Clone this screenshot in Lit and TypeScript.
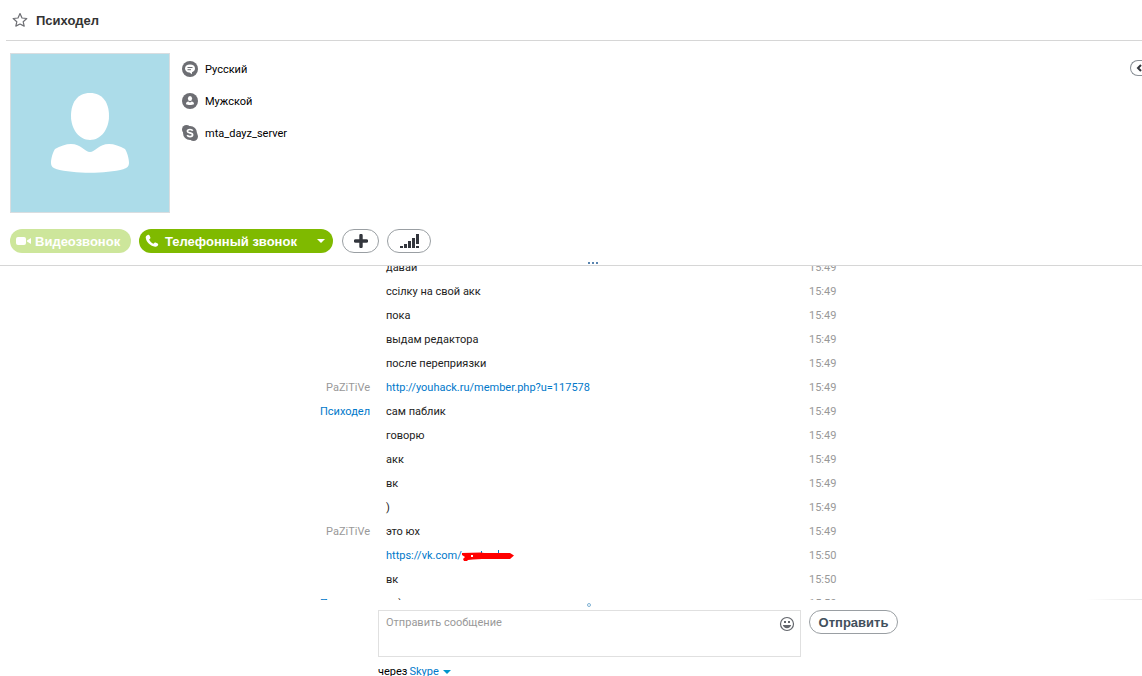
import { LitElement, html, css, svg, nothing } from "lit";
import { customElement } from "lit/decorators.js";

interface Message {
  from?: string;
  self?: boolean;
  text: string;
  link?: boolean;
  hidden?: boolean;
  time: string;
}

const messages: Message[] = [
  { text: "давай", time: "15:49" },
  { text: "ссілку на свой акк", time: "15:49" },
  { text: "пока", time: "15:49" },
  { text: "выдам редактора", time: "15:49" },
  { text: "после переприязки", time: "15:49" },
  { from: "PaZiTiVe", self: true, text: "http://youhack.ru/member.php?u=117578", link: true, time: "15:49" },
  { from: "Психодел", text: "сам паблик", time: "15:49" },
  { text: "говорю", time: "15:49" },
  { text: "акк", time: "15:49" },
  { text: "вк", time: "15:49" },
  { text: ")", time: "15:49" },
  { from: "PaZiTiVe", self: true, text: "это юх", time: "15:49" },
  { text: "https://vk.com/", link: true, hidden: true, time: "15:50" },
  { text: "вк", time: "15:50" },
  { from: "Психодел", text: "вк)", time: "15:50" },
];

const chatIcon = svg`<circle cx="8" cy="8" r="8" fill="#6d6e73"/><path d="M8 3.500c3 0 5 1.600 5 4 0 1.800-1.100 3.100-3 3.700V13.300L7.500 11.500C4.900 11.400 3 9.800 3 7.500c0-2.400 2-4 5-4z" fill="#fff"/><path d="M5.500 6.500h5M5.500 8.700h3.500" stroke="#6d6e73" stroke-width="1"/>`;
const personIcon = svg`<circle cx="8" cy="8" r="8" fill="#6d6e73"/><ellipse cx="8" cy="5.600" rx="2.100" ry="2.500" fill="#fff"/><path d="M4 11.300c0-1.700.9-2.700 2.300-2.700L8 9.500l1.700-.9c1.400 0 2.300 1 2.300 2.700-2 1-6 1-8 0z" fill="#fff"/>`;
const skypeIcon = svg`<circle cx="4.500" cy="4.500" r="4.500" fill="#6d6e73"/><circle cx="11.500" cy="11.500" r="4.500" fill="#6d6e73"/><circle cx="8" cy="8" r="7" fill="#6d6e73"/><path d="M10.700 5.700C10.100 4.700 9 4.500 8 4.500c-1.500 0-2.600.6-2.600 1.700C5.400 8.500 10.600 7.300 10.600 9.800c0 1.100-1.100 1.800-2.600 1.800-1.300 0-2.300-.4-2.800-1.400" fill="none" stroke="#fff" stroke-width="1.700"/>`;

@customElement("app-root")
export class AppRoot extends LitElement {
  static styles = css`
    :host {
      display: flex;
      flex-direction: column;
      height: 100vh;
      overflow: hidden;
      background: #fff;
      color: #000;
      font: 11px/16px Roboto, "Noto Sans", sans-serif;
    }
    * { box-sizing: border-box; }
    svg { display: block; flex: none; }
    button { font: inherit; color: inherit; cursor: pointer; }
    a { color: #0078ca; text-decoration: none; }
    .title {
      display: flex;
      align-items: center;
      gap: 8px;
      height: 41px;
      flex: none;
      margin-left: 6px;
      padding-left: 6px;
      border-bottom: 1px solid #d6d6d6;
    }
    .title h1 { margin: 0; padding-top: 2px; font: bold 13px/16px "Liberation Sans", sans-serif; color: #333; }
    .star { border: 0; padding: 0; background: none; }
    .profile {
      display: flex;
      flex: none;
      gap: 12px;
      padding: 12px 0 0 10px;
    }
    .avatar { width: 160px; height: 160px; border: 1px solid #d9dde0; background: #acdce9; }
    .facts { list-style: none; margin: 0; padding: 8px 0 0; flex: 1; }
    .facts li { display: flex; align-items: center; gap: 7px; height: 16px; margin-bottom: 16px; }
    .facts span { padding-top: 2px; }
    .collapse {
      display: flex;
      align-items: center;
      width: 12px;
      height: 16px;
      margin-top: 7px;
      padding: 0 0 0 5px;
      border: 1px solid #8a9097;
      border-right: 0;
      border-radius: 8px 0 0 8px;
      background: #fff;
    }
    .actions {
      display: flex;
      flex: none;
      align-items: flex-start;
      padding: 16px 10px 0;
      height: 53px;
      border-bottom: 1px solid #d6d6d6;
    }
    .pill {
      display: flex;
      align-items: center;
      justify-content: center;
      height: 24px;
      padding: 0 8px;
      border: 0;
      border-radius: 12px;
      font: bold 13px/16px "Liberation Sans", sans-serif;
      white-space: nowrap;
    }
    .pill span { padding-top: 2px; }
    .video { gap: 4px; width: 121px; padding: 0 6px; margin-right: 8px; background: #cde69b; color: #fff; justify-content: flex-start; }
    .call { gap: 6px; width: 194px; padding: 0 8px 0 6px; margin-right: 9px; background: #7fba00; color: #fff; justify-content: flex-start; }
    .call .caret { margin-left: auto; }
    .outline { border: 1px solid #9a9fa3; background: #fff; color: #42505c; }
    .add { width: 37px; margin-right: 8px; }
    .signal { width: 44px; }
    .grip { align-self: flex-end; display: flex; gap: 2px; margin: 0 auto 1px 157px; }
    .grip i { width: 2px; height: 2px; background: #5a85b0; }
    .history { flex: 1; min-height: 0; overflow: hidden; color: #222; }
    .rows { list-style: none; margin: -10px auto 0; padding: 0; width: 654px; max-width: 100%; }
    .row { display: grid; grid-template-columns: 126px 1fr 89px; align-items: center; height: 24px; }
    .from { text-align: right; color: #0078ca; }
    .from.self, time { color: #999; }
    .text { display: flex; align-items: center; padding-left: 16px; }
    .composer {
      display: grid;
      flex: none;
      grid-template-columns: 134px 1fr 89px;
      width: 654px;
      max-width: 100%;
      height: 76px;
      margin: 0 auto;
      align-content: start;
    }
    .edge { display: flex; justify-content: flex-end; flex: none; height: 1px; margin-top: -1px; }
    .edge i { width: 56px; background: linear-gradient(to right, #fff, #e6e6e6); }
    .handle { grid-column: 2; display: flex; justify-content: center; height: 10px; padding: 3px 10px 0 0; }
    .handle i { width: 4px; height: 4px; border: 1px solid #7fb2d4; border-radius: 2px; }
    .box { grid-column: 2; display: flex; align-items: flex-start; height: 47px; margin-right: 8px; padding: 4px 5px 4px 7px; border: 1px solid #e0e0e0; }
    textarea { flex: 1; height: 36px; padding: 0; border: 0; outline: 0; resize: none; font: inherit; color: #222; background: none; }
    textarea::placeholder { color: #999; opacity: 1; }
    .smile { border: 0; padding: 1px 0 0; background: none; }
    .via { grid-column: 2; display: flex; align-items: center; padding-top: 7px; gap: 2px; }
    .via a { display: flex; align-items: center; gap: 4px; }
  `;

  private row(m: Message) {
    return html`<li class="row">
      <span class="from ${m.self ? "self" : ""}">${m.from ?? nothing}</span>
      <span class="text">${m.link ? html`<a href=${m.text}>${m.text}</a>` : m.text}${m.hidden
        ? html`<svg width="52" height="12" viewBox="0 0 52 12"><path d="M19.500 1v3M36.500 0v4" stroke="#0078ca"/><path d="M0 3l19-.5 3 .5h26l4 2.500L48 9H20l-9 .5-5 .5-1 1H2L1 9l2-2-3-2z" fill="#f00"/><path d="M9 5h2v2H9z" fill="#fff"/></svg>`
        : nothing}</span>
      <time>${m.time}</time>
    </li>`;
  }

  render() {
    return html`
      <header class="title">
        <button class="star" aria-label="Избранное">
          <svg width="16" height="16" viewBox="0 0 16 16"><path d="M8 1.500l2 4.500 4.800.5-3.600 3.300 1 4.300L8 12l-4.200 2.100 1-4.300L1.200 6.500 6 6z" fill="none" stroke="#6d6e73" stroke-width="1.200" stroke-linejoin="round"/></svg>
        </button>
        <h1>Психодел</h1>
      </header>
      <section class="profile">
        <svg class="avatar" viewBox="0 0 158 158"><path d="M79 39c13 0 19 10 19 23s-8 24-19 24-19-11-19-24 6-23 19-23z" fill="#fff"/><path d="M44 95c5-3 11-5 16-5 10 0 14 8 19 8s9-8 19-8c5 0 11 2 16 5 2 3 4 9 4 14 0 4-3 5-5 6-19 5-49 5-68 0-2-1-5-2-5-6 0-5 2-11 4-14z" fill="#fff"/></svg>
        <ul class="facts">
          <li><svg width="16" height="16" viewBox="0 0 16 16">${chatIcon}</svg><span>Русский</span></li>
          <li><svg width="16" height="16" viewBox="0 0 16 16">${personIcon}</svg><span>Мужской</span></li>
          <li><svg width="16" height="16" viewBox="0 0 16 16">${skypeIcon}</svg><span>mta_dayz_server</span></li>
        </ul>
        <button class="collapse" aria-label="Свернуть">
          <svg width="6" height="8" viewBox="0 0 6 8"><path d="M5 1L2 4l3 3" fill="none" stroke="#33363d" stroke-width="2"/></svg>
        </button>
      </section>
      <div class="actions">
        <button class="pill video"><svg width="15" height="10" viewBox="0 0 15 10"><rect y="1" width="10" height="8" rx="2" fill="#fff"/><path d="M11 4.500L15 2v6l-4-2.500z" fill="#fff"/></svg><span>Видеозвонок</span></button>
        <button class="pill call"><svg width="14" height="14" viewBox="0 0 14 14"><path d="M1.500 1.800L3 .8c.7-.3 1.200 0 1.500.6l.9 2c.2.6 0 1-.4 1.300l-.9.8c.8 1.900 2.300 3.400 4.300 4.300l.9-.9c.4-.4.800-.5 1.300-.3l2 .9c.6.3.8.9.5 1.500-.6 1.300-1.600 1.900-3 1.700C5.600 12 1.500 8.500.8 4 .6 3 .8 2.400 1.500 1.800z" fill="#fff"/></svg><span>Телефонный звонок</span><svg class="caret" width="8" height="4" viewBox="0 0 8 4"><path d="M0 0h8L4 4z" fill="#fff"/></svg></button>
        <button class="pill outline add" aria-label="Добавить"><svg width="14" height="14" viewBox="0 0 14 14"><path d="M7 1.500v11M1.500 7h11" stroke="#33363d" stroke-width="3.400" stroke-linecap="round"/></svg></button>
        <button class="pill outline signal" aria-label="Качество связи"><svg width="20" height="14" viewBox="0 0 20 14"><path d="M1 12h3v2H1zM5 10h3v4H5zM9 7h3v7H9zM13 4h3v10h-3zM17 0h3v10h-3zM17 12h3v2h-3z" fill="#33363d"/></svg></button>
        <span class="grip"><i></i><i></i><i></i></span>
      </div>
      <main class="history"><ul class="rows">${messages.map((m) => this.row(m))}</ul></main>
      <div class="edge"><i></i></div>
      <form class="composer" @submit=${(e: Event) => e.preventDefault()}>
        <span class="handle"><i></i></span>
        <div class="box">
          <textarea aria-label="Отправить сообщение" placeholder="Отправить сообщение"></textarea>
          <button type="button" class="smile" aria-label="Смайлики"><svg width="16" height="16" viewBox="0 0 16 16"><circle cx="8" cy="8" r="6.500" fill="none" stroke="#63666c" stroke-width="1.200"/><path d="M5 5h2v2H5zM9 5h2v2H9zM3.800 9h8.400c-.5 2-2 3.200-4.200 3.200S4.300 11 3.800 9z" fill="#63666c"/></svg></button>
        </div>
        <button class="pill outline send"><span>Отправить</span></button>
        <span class="via">через <a href="#">Skype <svg width="8" height="4" viewBox="0 0 8 4"><path d="M0 0h8L4 4z" fill="#0095cc"/></svg></a></span>
      </form>
    `;
  }
}
